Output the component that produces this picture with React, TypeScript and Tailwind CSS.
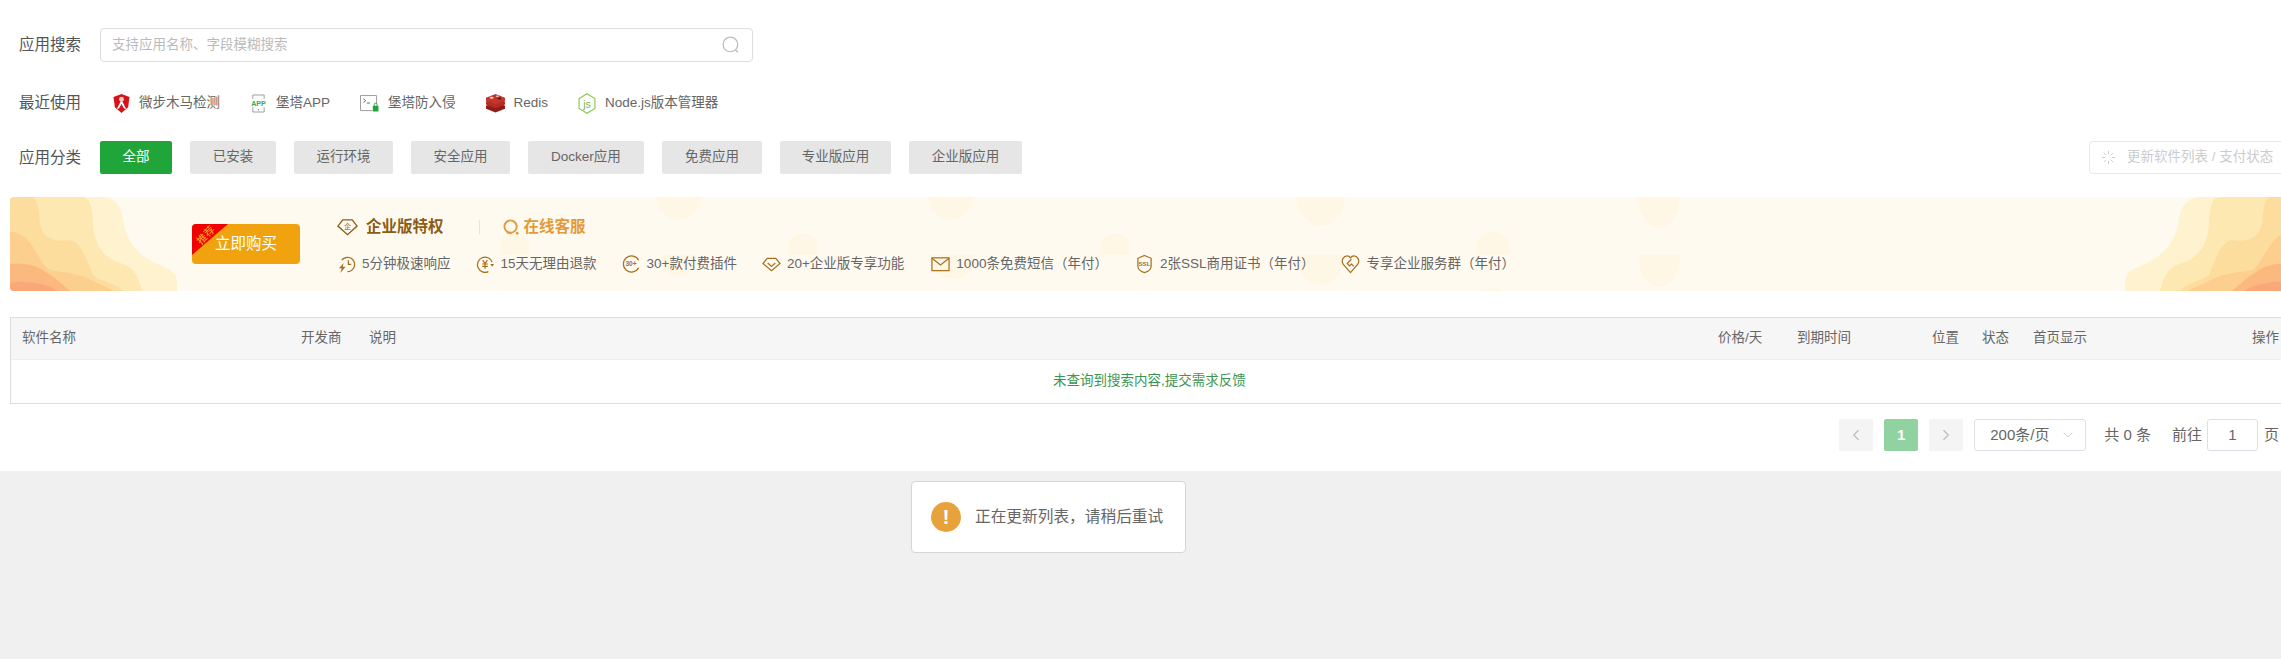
import React from "react";
import { ChevronDown, ChevronLeft, ChevronRight, Loader } from "lucide-react";

const categories = ["全部", "已安装", "运行环境", "安全应用", "Docker应用", "免费应用", "专业版应用", "企业版应用"];
const categoryWidths = ["w-[72px]", "w-[86px]", "w-[99px]", "w-[99px]", "w-[116px]", "w-[100px]", "w-[111px]", "w-[113px]"];

function ShieldIcon() {
  return (
    <svg viewBox="0 0 18 20" className="h-[19px] w-[17px]">
      <path d="M9 0 L17.5 3 L16 14 L9 20 L2 14 L.5 3Z" fill="#d3151b" />
      <path d="M9 6 L14 16 L11.5 15 L9 10.5 L6.5 15 L4 16Z" fill="#fff" />
      <circle cx="9" cy="5.5" r="2.6" fill="#f6c9c9" />
    </svg>
  );
}

function AppIcon() {
  return (
    <svg viewBox="0 0 18 20" className="h-[19px] w-[17px]">
      <path d="M3 5V1h12v4M3 14v5h12v-5" fill="none" stroke="#999" strokeWidth="1" />
      <circle cx="9" cy="16.5" r=".7" fill="#777" />
      <text x="9" y="12.5" textAnchor="middle" fontSize="7.500" fontWeight="700" fill="#2fae4b" fontFamily="Liberation Sans">APP</text>
    </svg>
  );
}

function TerminalIcon() {
  return (
    <svg viewBox="0 0 20 18" className="h-[17px] w-[19px]">
      <path d="M13 16.5H.5V.5h17v9" fill="none" stroke="#999" strokeWidth="1" />
      <path d="M3.5 4l2.5 2-2.5 2M7 8.5h3.5" fill="none" stroke="#2c8c3f" strokeWidth="1" />
      <rect x="13.5" y="11.5" width="6" height="6" rx=".6" fill="#20a53a" />
      <path d="M15 11.5v-1.3a1.5 1.5 0 0 1 3 0v1.3" fill="none" stroke="#20a53a" strokeWidth="1" />
    </svg>
  );
}

function RedisIcon() {
  return (
    <svg viewBox="0 0 20 20" className="h-[20px] w-[19px]">
      <path d="M0 13 L10 9 L20 13 V16 L10 20 L0 16Z" fill="#8f1d17" />
      <path d="M0 8.500 L10 4.500 L20 8.500 V11.500 L10 15.500 L0 11.500Z" fill="#b52a22" />
      <path d="M0 4.500 L10 .5 L20 4.500 V7.500 L10 11.500 L0 7.500Z" fill="#c5352b" />
      <ellipse cx="6" cy="4.500" rx="2" ry="1" fill="#f5d5d2" />
      <ellipse cx="12" cy="2.800" rx="1.500" ry=".8" fill="#f5d5d2" />
      <path d="M11 5.500 L15.500 4 L15.500 6.500Z" fill="#5e1410" />
    </svg>
  );
}

function NodeIcon() {
  return (
    <svg viewBox="0 0 18 22" className="h-[21px] w-[18px]">
      <path d="M9 .7 L17.300 5.800 V16.200 L9 21.300 L.7 16.200 V5.800Z" fill="none" stroke="#8cc84b" strokeWidth="1.200" />
      <text x="9" y="15.500" textAnchor="middle" fontSize="11" fill="#7ab340" fontFamily="Liberation Sans">js</text>
    </svg>
  );
}

const recent = [
  { name: "微步木马检测", icon: <ShieldIcon /> },
  { name: "堡塔APP", icon: <AppIcon /> },
  { name: "堡塔防入侵", icon: <TerminalIcon /> },
  { name: "Redis", icon: <RedisIcon /> },
  { name: "Node.js版本管理器", icon: <NodeIcon /> },
];

function Gold({ children, view = "0 0 20 20" }: { children: React.ReactNode; view?: string }) {
  return (
    <svg viewBox={view} fill="none" stroke="#a8701c" strokeWidth="1.300" className="h-[20px] w-[19px] shrink-0">
      {children}
    </svg>
  );
}

const perks = [
  {
    text: "5分钟极速响应",
    icon: (
      <Gold>
        <path d="M5 6a7.500 7.500 0 1 1 6 12" />
        <path d="M12 6v4.500h3" />
        <path d="M7 9L2 14.500h3L3.500 19.500 9 13H6Z" fill="#a8701c" stroke="none" />
      </Gold>
    ),
  },
  {
    text: "15天无理由退款",
    icon: (
      <Gold>
        <path d="M17 8A8 8 0 1 0 13 18" />
        <path d="M7 6l2.500 3.500L12 6M6.500 10h6M6.500 12.500h6M9.500 9.500V15" />
        <path d="M15 10h4l-2 3Z" fill="#a8701c" stroke="none" />
      </Gold>
    ),
  },
  {
    text: "30+款付费插件",
    icon: (
      <Gold>
        <path d="M17.500 6A8.500 8.500 0 1 0 17.500 14" />
        <text x="9.500" y="12.500" textAnchor="middle" fontSize="7" fontWeight="700" fill="#a8701c" stroke="none" fontFamily="Liberation Sans">30+</text>
      </Gold>
    ),
  },
  {
    text: "20+企业版专享功能",
    icon: (
      <Gold>
        <path d="M5.500 4h9L19 9.500 10 17 1 9.500Z" />
        <path d="M6 9l4 3.500L14 9" />
      </Gold>
    ),
  },
  {
    text: "1000条免费短信\uFF08年付\uFF09",
    icon: (
      <Gold>
        <rect x="1" y="3.500" width="18" height="13.500" />
        <path d="M1 4l9 7 9-7" />
      </Gold>
    ),
  },
  {
    text: "2张SSL商用证书\uFF08年付\uFF09",
    icon: (
      <Gold>
        <path d="M10 1l7 3v8c0 3.500-3.500 6-7 7-3.500-1-7-3.500-7-7V4Z" />
        <text x="10" y="12.500" textAnchor="middle" fontSize="6.500" fontWeight="700" fill="#a8701c" stroke="none" fontFamily="Liberation Sans">SSL</text>
      </Gold>
    ),
  },
  {
    text: "专享企业服务群\uFF08年付\uFF09",
    icon: (
      <Gold>
        <path d="M10 19L2.500 10.500C-.5 6 3 1.500 6.500 1.500c1.500 0 2.700.8 3.500 2 .8-1.200 2-2 3.500-2 3.500 0 7 4.500 4 9Z" />
        <path d="M11 5L6.500 9.500 9 12l2-2 2.500 2.500" />
      </Gold>
    ),
  },
];

const columns = [
  { label: "软件名称", w: "w-[279px]" },
  { label: "开发商", w: "w-[68px]" },
  { label: "说明", w: "w-[1349px]" },
  { label: "价格/天", w: "w-[79px]" },
  { label: "到期时间", w: "w-[135px]" },
  { label: "位置", w: "w-[50px]" },
  { label: "状态", w: "w-[51px]" },
  { label: "首页显示", w: "w-[219px]" },
  { label: "操作", w: "w-[40px]" },
];

// wave corner of the banner, drawn for the left side and mirrored on the right
function Waves({ className }: { className: string }) {
  return (
    <svg viewBox="0 0 167 94" className={className}>
      <path d="M3 0H90C106 0 111 10 113 22C116 46 130 60 150 68C163 73 167 78 167 85V94H3Q0 94 0 91V3Q0 0 3 0Z" fill="#fff3cf" />
      <path d="M3 0H72C80 1 82 8 83 26C84 44 90 58 107 65C118 68 127 72 132 94H3Q0 94 0 91V3Q0 0 3 0Z" fill="#fee8b2" />
      <path d="M3 0H23C28 4 29 14 30 26C32 38 40 46 60 43C70 44 76 60 83 78C90 84 106 86 113 94H3Q0 94 0 91V3Q0 0 3 0Z" fill="#fddd9e" />
      <path d="M0 35C6 35 13 37 20 46C28 56 32 68 40 73C52 76 66 74 87 86C93 89 100 91 103 94H3Q0 94 0 91Z" fill="#fccf8e" />
      <path d="M0 67C14 65 26 69 33 73C40 78 44 80 47 83C52 87 57 91 60 94H3Q0 94 0 91Z" fill="#fbb97f" />
      <path d="M0 86C10 84 24 84 40 90C44 91 46 93 48 94H3Q0 94 0 91Z" fill="#faa87a" />
    </svg>
  );
}

// faint cut-off dots in the banner background
function Dots() {
  return (
    <svg viewBox="0 0 2282 94" className="absolute inset-0 h-[94px] w-[2282px]">
      <g fill="#fff7e6">
        <ellipse cx="669" cy="0" rx="22" ry="23" />
        <ellipse cx="941" cy="0" rx="22" ry="23" />
        <ellipse cx="1311" cy="0" rx="24" ry="29" />
        <ellipse cx="1649" cy="0" rx="21" ry="31" />
        <path d="M490 58V51a15 15 0 0 1 30 0V58Z" />
        <path d="M778 58V51a15 15 0 0 1 30 0V58Z" />
        <path d="M1090 58V51a15 15 0 0 1 30 0V58Z" />
        <path d="M1466 58V51a17 16 0 0 1 34 0V58Z" />
        <path d="M650 58H687C687 72 678 80 668 80C658 80 650 72 650 58Z" />
        <path d="M919 58H965C965 74 954 82 942 82C930 82 919 74 919 58Z" />
        <path d="M1287 58H1335C1335 78 1322 88 1311 88C1299 88 1287 78 1287 58Z" />
        <path d="M1628 58H1670C1670 78 1660 90 1649 90C1638 90 1628 78 1628 58Z" />
        <ellipse cx="1483" cy="94" rx="9" ry="3" />
      </g>
    </svg>
  );
}

export default function App() {
  return (
    <div className="relative h-[659px] w-[2281px] overflow-hidden bg-[#f0f0f0] font-['Liberation_Sans','Noto_Sans_CJK_SC',sans-serif] text-[#666]">
      <div className="h-[471px] w-[2292px] bg-white pl-[10px] pt-[28px]">
        {/* Search */}
        <div className="flex items-center pl-[9px]">
          <span className="w-[81px] text-[15.500px] text-[#555]">应用搜索</span>
          <div className="flex h-[34px] w-[653px] items-center justify-between rounded-[4px] border border-[#ddd] pl-[11px] pr-[11px]">
            <span className="text-[13.500px] text-[#bbb]">支持应用名称、字段模糊搜索</span>
            <svg viewBox="0 0 16 16" fill="none" stroke="#bbb" strokeWidth="1.100" className="mr-[1px] h-[18px] w-[18px]">
              <circle cx="7.500" cy="7.500" r="6.500" />
              <path d="M12 12.500l2 2" />
            </svg>
          </div>
        </div>

        {/* Recently used */}
        <div className="mt-[25px] flex h-[32px] items-center pl-[9px]">
          <span className="w-[94px] text-[15.500px] text-[#555]">最近使用</span>
          <div className="flex items-center gap-[30px]">
            {recent.map((item) => (
              <div key={item.name} className="flex items-center gap-[9px]">
                {item.icon}
                <span className="text-[13.500px] text-[#666]">{item.name}</span>
              </div>
            ))}
          </div>
        </div>

        {/* Categories */}
        <div className="mt-[22px] flex h-[33px] items-center justify-between pl-[9px]">
          <div className="flex items-center">
            <span className="w-[81px] text-[15.500px] text-[#555]">应用分类</span>
            <div className="flex gap-[18px]">
              {categories.map((c, i) => (
                <div
                  key={c}
                  className={`flex h-[33px] items-center justify-center rounded-[2px] text-[13.500px] ${categoryWidths[i]} ${i === 0 ? "bg-[#20a53a] text-white" : "bg-[#e6e6e6] text-[#666]"}`}
                >
                  {c}
                </div>
              ))}
            </div>
          </div>
          <div className="flex h-[33px] w-[203px] items-center whitespace-pre rounded-[4px] border border-[#e8e8e8] pl-[11px] text-[13.500px] text-[#ccc]">
            <Loader className="mr-[11px] h-[15px] w-[15px]" strokeWidth={1.500} />
            更新软件列表 / 支付状态
          </div>
        </div>

        {/* Enterprise banner */}
        <div className="relative mt-[23px] flex h-[94px] w-[2282px] items-center justify-between overflow-hidden rounded-[4px] bg-[#fffaf0]">
          <Dots />
          <Waves className="relative h-[94px] w-[167px]" />
          <Waves className="relative h-[94px] w-[167px] -scale-x-100" />
          <div className="absolute left-[182px] top-[27px] flex h-[40px] w-[108px] items-center justify-end rounded-[4px] bg-[#f0a30f] pr-[23px] text-[15.500px] text-white">
            <div className="absolute inset-0 overflow-hidden rounded-[4px]">
              <div className="h-[31px] w-[36px] bg-[#f00000] [clip-path:polygon(0_0,100%_0,0_100%)]" />
            </div>
            <span className="absolute left-[3px] top-[4px] -rotate-45 text-[10.500px] leading-[14px] text-[#f8b020]">推荐</span>
            <span className="relative">立即购买</span>
          </div>
          <div className="absolute left-[327px] top-[20px] flex flex-col">
            <div className="flex h-[20px] items-center">
              <svg viewBox="0 0 22 18" fill="none" stroke="#8c5c14" strokeWidth="1.400" className="mr-[8px] h-[18px] w-[21px]">
                <path d="M6 1.500h10L21 8l-10 9L1 8Z" />
                <text x="11" y="11.500" textAnchor="middle" fontSize="7.500" fill="#8c5c14" stroke="none">企</text>
              </svg>
              <span className="text-[15.500px] font-bold text-[#8c5c14]">企业版特权</span>
              <span className="ml-[35px] h-[14px] w-px bg-[#e8e4da]" />
              <svg viewBox="0 0 18 18" fill="none" stroke="#e39a3b" strokeWidth="2" className="ml-[23px] mr-[4px] h-[17px] w-[17px]">
                <circle cx="8" cy="8" r="6.500" />
                <path d="M4 14l5 1.500" />
                <circle cx="15" cy="15" r="1.500" fill="#e39a3b" stroke="none" />
              </svg>
              <span className="text-[15.500px] font-bold text-[#e39a3b]">在线客服</span>
            </div>
            <div className="mt-[17px] flex h-[20px] items-center gap-[25px]">
              {perks.map((p, i) => (
                <div key={p.text} className={`flex items-center gap-[6px] ${i >= 4 ? "ml-[2px]" : ""}`}>
                  {p.icon}
                  <span className="whitespace-nowrap text-[13.500px] text-[#666]">{p.text}</span>
                </div>
              ))}
            </div>
          </div>
        </div>

        {/* Table */}
        <div className="mt-[26px] w-[2282px] border border-[#ddd]">
          <div className="flex h-[42px] items-center border-b border-[#eee] bg-[#f6f6f6] pl-[11px] text-[13.500px] text-[#666]">
            {columns.map((col) => (
              <span key={col.label} className={`shrink-0 ${col.w}`}>
                {col.label}
              </span>
            ))}
          </div>
          <div className="flex h-[43px] items-center pl-[1042px] text-[13.500px] text-[#3d9450]">
            未查询到搜索内容,提交需求反馈
          </div>
        </div>

        {/* Pagination */}
        <div className="mt-[15px] flex h-[32px] w-[2271px] items-center justify-end pr-[2px] text-[15px] text-[#666]">
          <div className="flex h-[32px] w-[34px] items-center justify-center rounded-[2px] bg-[#f4f4f5] text-[#bbb]">
            <ChevronLeft className="h-[18px] w-[18px]" strokeWidth={1.500} />
          </div>
          <div className="ml-[11px] flex h-[32px] w-[34px] items-center justify-center rounded-[2px] bg-[#90d2a0] font-bold text-white">
            1
          </div>
          <div className="ml-[11px] flex h-[32px] w-[34px] items-center justify-center rounded-[2px] bg-[#f4f4f5] text-[#bbb]">
            <ChevronRight className="h-[18px] w-[18px]" strokeWidth={1.500} />
          </div>
          <div className="ml-[11px] flex h-[32px] w-[112px] items-center justify-between rounded-[3px] border border-[#dcdfe6] pl-[15px] pr-[9px]">
            <span>200条/页</span>
            <ChevronDown className="h-[16px] w-[16px] text-[#c0c4cc]" strokeWidth={1.200} />
          </div>
          <span className="ml-[18px]">共 0 条</span>
          <span className="ml-[21px]">前往</span>
          <div className="ml-[5px] flex h-[32px] w-[51px] items-center justify-center rounded-[3px] border border-[#dcdfe6]">1</div>
          <span className="ml-[6px]">页</span>
        </div>
      </div>

      {/* Toast */}
      <div className="absolute left-[911px] top-[481px] flex h-[72px] w-[275px] items-center rounded-[4px] border border-[#d6d6d6] bg-white pl-[19px]">
        <div className="flex h-[30px] w-[30px] items-center justify-center rounded-full bg-[#e8a23c] text-[21px] font-bold text-white">!</div>
        <span className="ml-[14px] whitespace-nowrap text-[15.700px] text-[#666]">{"正在更新列表\uFF0C请稍后重试"}</span>
      </div>
    </div>
  );
}
